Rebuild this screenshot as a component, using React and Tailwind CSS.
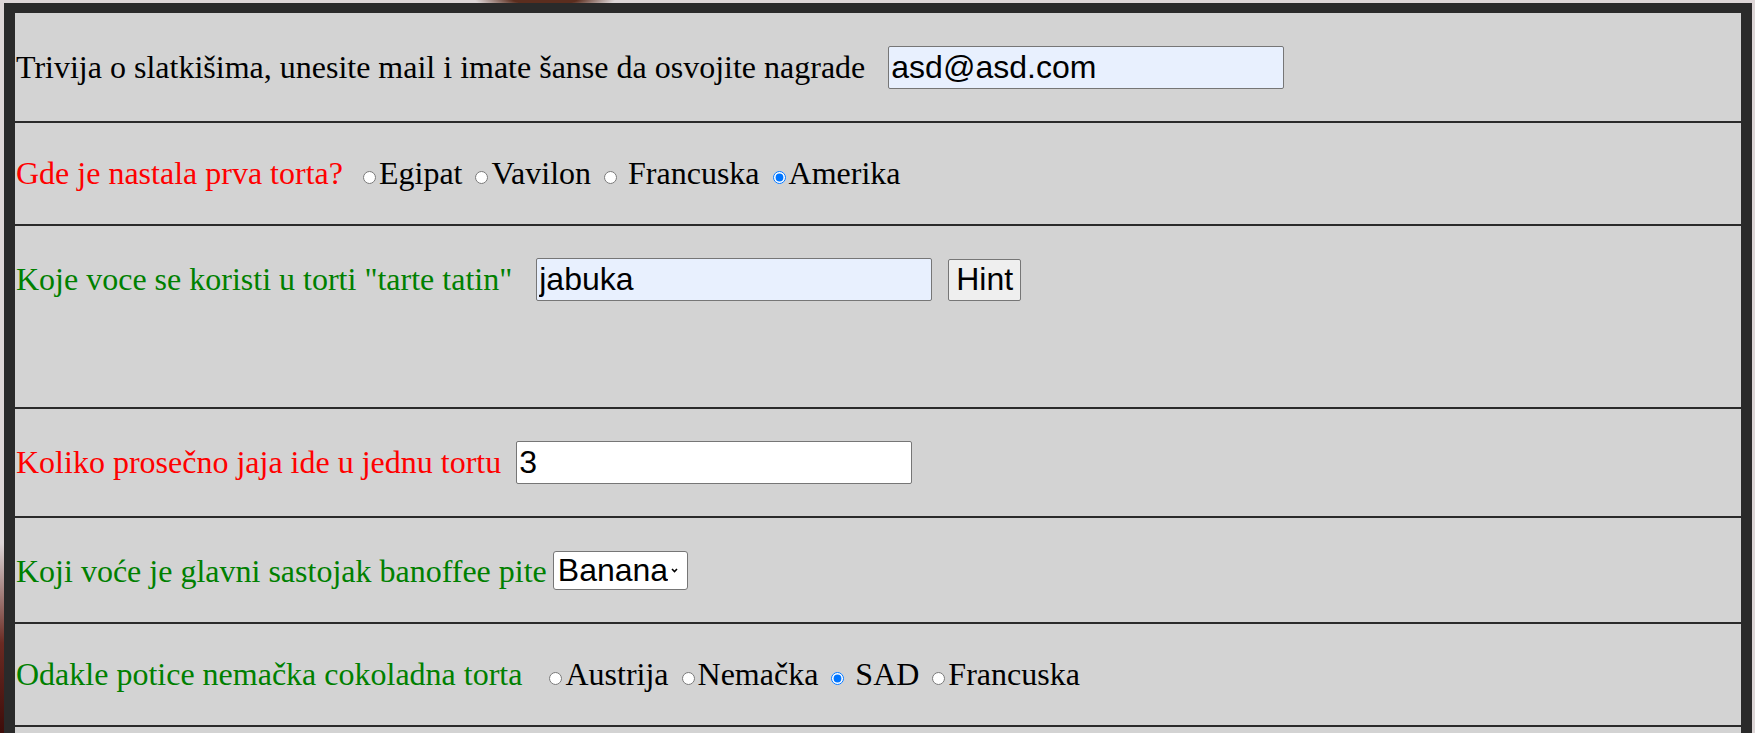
import React from 'react';

const serif = "font-['Liberation_Serif','Times_New_Roman',serif]";
const sans = "font-['Liberation_Sans',Arial,sans-serif]";

const Row = ({ className, children }) => (
    <div className={`flex border-b-2 border-[#2a2a2a] pl-px ${className}`}>
        <div className="leading-[normal] whitespace-nowrap">{children}</div>
    </div>
);

const Radio = ({ name, checked, className = 'ml-[13px]' }) => (
    <input
        type="radio"
        name={name}
        defaultChecked={checked}
        className={`mt-[3px] mr-[3px] ${className}`}
    />
);

const TextInput = ({ value, autofill, className = '' }) => (
    <input
        type="text"
        defaultValue={value}
        className={`h-[43px] w-[396px] rounded-[2px] border border-[#767676] px-[2px] text-[32px] text-black outline-none ${sans} ${autofill ? 'bg-[#e8f0fe]' : 'bg-white'} ${className}`}
    />
);

export default function App() {
    return (
        <div className="min-h-screen bg-[#ddd6d7] bg-[image:radial-gradient(ellipse_70px_10px_at_545px_0px,#5b2d1e_0%,#5b2d1e_45%,transparent_100%),radial-gradient(circle_at_0px_733px,#3d0d0a_0px,#6a2a22_90px,transparent_190px)] pt-[3px] pl-[4px] pr-[3px]">
            <div className={`border-x-[11px] border-t-[10px] border-[#2a2a2a] bg-[#d3d3d3] text-[32px] ${serif}`}>
                <Row className="h-[110px] items-center">
                    <span className="text-black">Trivija o slatkišima, unesite mail i imate šanse da osvojite nagrade</span>
                    <TextInput value="asd@asd.com" autofill className="ml-[23px]" />
                </Row>

                <Row className="h-[103px] items-center">
                    <span className="text-[#ff0000]">Gde je nastala prva torta?</span>
                    <Radio name="q1" className="ml-[20px]" />
                    <span>Egipat</span>
                    <Radio name="q1" />
                    <span>Vavilon</span>
                    <Radio name="q1" />
                    <span className="ml-[8px]">Francuska</span>
                    <Radio name="q1" checked />
                    <span>Amerika</span>
                </Row>

                <Row className="h-[183px] items-start pt-[32px]">
                    <span className="text-[#008000]">Koje voce se koristi u torti "tarte tatin"</span>
                    <TextInput value="jabuka" autofill className="ml-[24px]" />
                    <button
                        type="button"
                        className={`ml-[16px] h-[42px] rounded-[2px] border border-[#767676] bg-[#efefef] px-[7px] text-[32px] text-black ${sans}`}
                    >
                        Hint
                    </button>
                </Row>

                <Row className="h-[109px] items-center">
                    <span className="text-[#ff0000]">Koliko prosečno jaja ide u jednu tortu</span>
                    <TextInput value="3" className="ml-[15px]" />
                </Row>

                <Row className="h-[106px] items-center">
                    <span className="text-[#008000]">Koji voće je glavni sastojak banoffee pite</span>
                    <span className="ml-[6px] inline-flex h-[39px] items-center rounded-[3px] border border-[#767676] bg-white pl-[4px] pr-[9px] align-baseline">
                        <select
                            defaultValue="banana"
                            className={`w-[110px] appearance-none bg-transparent text-[32px] leading-[normal] text-black outline-none ${sans}`}
                        >
                            <option value="banana">Banana</option>
                            <option value="jabuka">Jabuka</option>
                            <option value="jagoda">Jagoda</option>
                        </select>
                        <svg width="7" height="5" viewBox="0 0 7 5" className="ml-[3px]">
                            <path d="M1 1l2.5 2.5L6 1" stroke="#000" strokeWidth="1.6" fill="none" />
                        </svg>
                    </span>
                </Row>

                <Row className="h-[103px] items-center">
                    <span className="text-[#008000]">Odakle potice nemačka cokoladna torta</span>
                    <Radio name="q6" className="ml-[27px]" />
                    <span>Austrija</span>
                    <Radio name="q6" />
                    <span>Nemačka</span>
                    <Radio name="q6" checked />
                    <span className="ml-[8px]">SAD</span>
                    <Radio name="q6" />
                    <span>Francuska</span>
                </Row>

                <div className="h-[100px]" />
            </div>
        </div>
    );
}
